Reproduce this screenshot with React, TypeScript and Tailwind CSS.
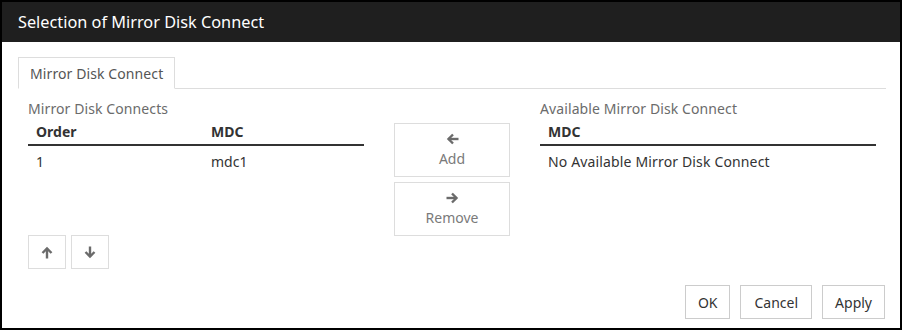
import React from "react";

const ArrowLeft = () => (
  <svg width="13" height="12" viewBox="0 0 13 12" fill="none" stroke="#6b6b6b" strokeWidth="2.4">
    <path d="M12.5 6H2.5" />
    <path d="M7 1.5L2.5 6L7 10.5" />
  </svg>
);
const ArrowRight = () => (
  <svg width="13" height="12" viewBox="0 0 13 12" fill="none" stroke="#6b6b6b" strokeWidth="2.4">
    <path d="M0.5 6H10.5" />
    <path d="M6 1.5L10.5 6L6 10.5" />
  </svg>
);
const ArrowUp = () => (
  <svg width="12" height="13" viewBox="0 0 12 13" fill="none" stroke="#6b6b6b" strokeWidth="2.4">
    <path d="M6 12.5V2.5" />
    <path d="M1.5 7L6 2.5L10.5 7" />
  </svg>
);
const ArrowDown = () => (
  <svg width="12" height="13" viewBox="0 0 12 13" fill="none" stroke="#6b6b6b" strokeWidth="2.4">
    <path d="M6 0.5V10.5" />
    <path d="M1.5 6L6 10.5L10.5 6" />
  </svg>
);

export default function App() {
  return (
    <div
      className="w-[904px] h-[332px] bg-white"
      style={{ fontFamily: '"Noto Sans", "Open Sans", sans-serif' }}
    >
      <div className="w-[902px] h-[330px] border-2 border-black flex flex-col bg-white">
        <div className="h-[40px] bg-[#1f1f1f] flex items-center pl-[16px] text-white text-[16.3px]">
          Selection of Mirror Disk Connect
        </div>
        <div className="flex-1 flex flex-col pl-[16px] pr-[14px]">
          <div className="mt-[15px] flex border-b border-[#dddddd]">
            <div className="h-[32px] -mb-px border border-[#dddddd] border-b-white bg-white px-[11px] flex items-center text-[14px] text-[#555555] tracking-[0.1px]">
              Mirror Disk Connect
            </div>
          </div>
          <div className="flex pl-[10px]">
            <div className="w-[336px] flex flex-col">
              <div className="mt-[9px] h-[20px] flex items-center text-[14px] text-[#6b6b6b] tracking-[0.1px]">
                Mirror Disk Connects
              </div>
              <div className="h-[28px] pt-[1px] flex items-center border-b-2 border-[#333333] text-[14px] font-bold text-[#333333]">
                <div className="w-[175px] pl-[8px]">Order</div>
                <div className="pl-[8px]">MDC</div>
              </div>
              <div className="h-[30px] flex items-center text-[14px] text-[#333333]">
                <div className="w-[175px] pl-[8px]">1</div>
                <div className="pl-[8px]">mdc1</div>
              </div>
              <div className="mt-[59px] flex gap-[5px]">
                <button className="w-[38px] h-[34px] border border-[#dddddd] flex items-center justify-center">
                  <ArrowUp />
                </button>
                <button className="w-[38px] h-[34px] border border-[#dddddd] flex items-center justify-center">
                  <ArrowDown />
                </button>
              </div>
            </div>
            <div className="ml-[30px] w-[116px] flex flex-col gap-[5px] pt-[34px]">
              <button className="h-[54px] border border-[#dddddd] flex flex-col items-center justify-center text-[14px] text-[#7a7a7a] leading-[18px]">
                <ArrowLeft />
                <span className="mt-[5px]">Add</span>
              </button>
              <button className="h-[54px] border border-[#dddddd] flex flex-col items-center justify-center text-[14px] text-[#7a7a7a] leading-[18px]">
                <ArrowRight />
                <span className="mt-[5px]">Remove</span>
              </button>
            </div>
            <div className="ml-[30px] w-[336px] flex flex-col">
              <div className="mt-[9px] h-[20px] flex items-center text-[14px] text-[#6b6b6b] tracking-[0.1px]">
                Available Mirror Disk Connect
              </div>
              <div className="h-[28px] pt-[1px] flex items-center border-b-2 border-[#333333] text-[14px] font-bold text-[#333333]">
                <div className="pl-[8px]">MDC</div>
              </div>
              <div className="h-[30px] flex items-center text-[14px] text-[#333333] tracking-[0.15px]">
                <div className="pl-[8px]">No Available Mirror Disk Connect</div>
              </div>
            </div>
          </div>
          <div className="mt-[16px] flex justify-end gap-[10px] pr-[1px]">
            <button className="h-[34px] px-[12px] border border-[#cccccc] text-[14px] text-[#333333]">OK</button>
            <button className="h-[34px] px-[13px] border border-[#cccccc] text-[14px] text-[#333333]">Cancel</button>
            <button className="h-[34px] px-[12px] border border-[#cccccc] text-[14px] text-[#333333]">Apply</button>
          </div>
        </div>
      </div>
    </div>
  );
}
